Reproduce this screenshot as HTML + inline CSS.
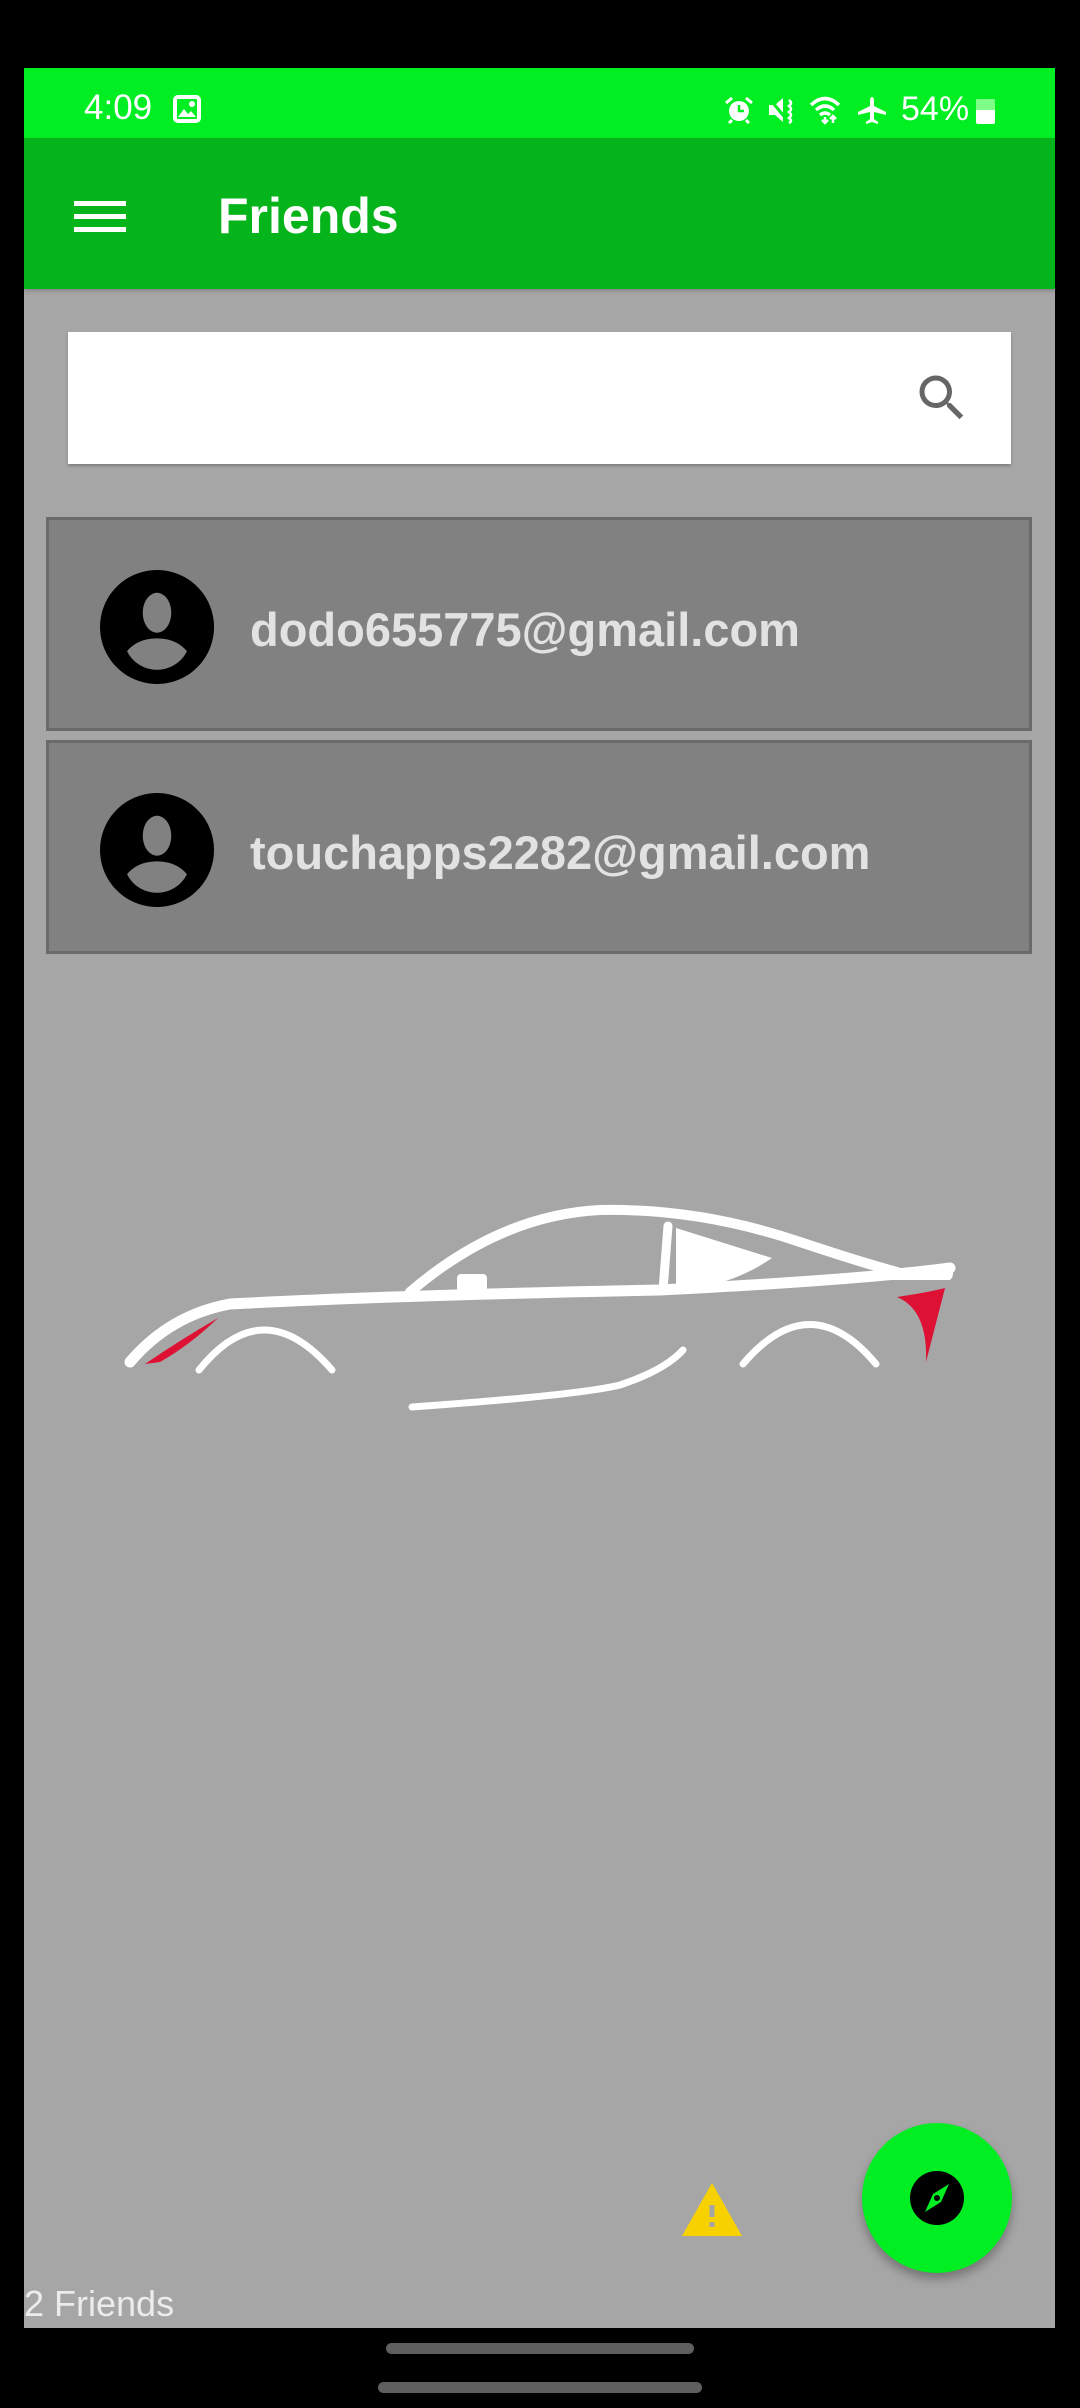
<!DOCTYPE html>
<html><head><meta charset="utf-8">
<style>
html,body{margin:0;padding:0;background:#000;}
body{width:1080px;height:2408px;position:relative;overflow:hidden;font-family:"Liberation Sans",sans-serif;}
.abs{position:absolute;}
#screen{left:24px;top:68px;width:1031px;height:2260px;background:#a6a6a6;}
#status{left:24px;top:68px;width:1031px;height:70px;background:#00ee22;}
#appbar{left:24px;top:138px;width:1031px;height:151px;background:#05b31a;box-shadow:0 2px 4px rgba(0,0,0,.2);}
.time{left:84px;top:88px;color:#fff;font-size:35px;}
.title{left:218px;top:187px;color:#fff;font-size:50px;font-weight:bold;}
.search{left:68px;top:332px;width:943px;height:132px;background:#fff;box-shadow:0 2px 3px rgba(0,0,0,.25);}
.item{left:46px;width:986px;height:214px;background:#818181;border:3px solid #6a6a6a;box-sizing:border-box;}
.item .txt{position:absolute;left:201px;top:82px;font-size:47px;font-weight:bold;color:#e2e2e2;}
.item svg{position:absolute;left:51px;top:50px;}
.count{left:24px;top:2283px;color:#ececec;font-size:36px;}
.fab{left:862px;top:2123px;width:150px;height:150px;border-radius:50%;background:#00ee22;box-shadow:0 6px 10px rgba(0,0,0,.3);}
.bar{background:#5f5f5f;border-radius:6px;height:11px;}
</style></head><body>
<div class="abs" id="screen"></div>
<div class="abs" id="status"></div>
<div class="abs" id="appbar"></div>
<div class="abs time">4:09</div>
<svg class="abs" style="left:173px;top:95px" width="28" height="28" viewBox="0 0 28 28"><rect x="2" y="2" width="24" height="24" rx="3" fill="none" stroke="#fff" stroke-width="4"/><path d="M5 22 L11 14 L15 19 L18 16 L23 22Z" fill="#fff"/><circle cx="19" cy="9" r="3" fill="#fff"/></svg>
<svg class="abs" style="left:724px;top:96px" width="30" height="28" viewBox="0 0 30 28"><circle cx="15" cy="15" r="10" fill="#fff"/><path d="M15 9 V15 H20" stroke="#00ee22" stroke-width="2.5" fill="none"/><path d="M2 7 L8 2 M28 7 L22 2 M8 24 L5 27 M22 24 L25 27" stroke="#fff" stroke-width="3"/></svg>
<svg class="abs" style="left:767px;top:96px" width="30" height="28" viewBox="0 0 30 28"><path d="M2 9 H8 L16 2 V26 L8 19 H2Z" fill="#fff"/><path d="M2 2 L20 24" stroke="#00ee22" stroke-width="3"/><path d="M22 4 Q26 7 22 10 Q26 13 22 16 Q26 19 22 22 Q26 25 22 27" stroke="#fff" stroke-width="2.5" fill="none"/></svg>
<svg class="abs" style="left:809px;top:95px" width="42" height="30" viewBox="0 0 42 30"><path d="M2 10 Q16 -3 30 10 M7 15 Q16 7 25 15 M11 20 Q16 16 21 20" stroke="#fff" stroke-width="3.5" fill="none"/><path d="M16 22 V28 M13 25 L16 28 L19 25 M24 28 V21 M21 24 L24 21 L27 24" stroke="#fff" stroke-width="2.5" fill="none"/></svg>
<svg class="abs" style="left:857px;top:96px" width="30" height="28" viewBox="0 0 30 28"><path d="M15 1 Q17 1 17 5 V10 L29 16 V19 L17 16 V23 L21 26 V28 L15 26 L9 28 V26 L13 23 V16 L1 19 V16 L13 10 V5 Q13 1 15 1Z" fill="#fff"/></svg>
<div class="abs" style="left:901px;top:90px;color:#fff;font-size:34px">54%</div>
<div class="abs" style="left:976px;top:99px;width:19px;height:25px;background:#fff;border-radius:2px"></div>
<div class="abs" style="left:976px;top:99px;width:19px;height:11px;background:#7fff88;border-radius:2px 2px 0 0"></div>
<div class="abs" style="left:74px;top:201px;width:52px;height:5px;background:#fff"></div>
<div class="abs" style="left:74px;top:214px;width:52px;height:5px;background:#fff"></div>
<div class="abs" style="left:74px;top:227px;width:52px;height:5px;background:#fff"></div>
<div class="abs title">Friends</div>
<div class="abs search"></div>
<svg class="abs" style="left:912px;top:368px" width="60" height="60" viewBox="0 0 24 24"><path fill="#666" d="M15.5 14h-.79l-.28-.27A6.47 6.47 0 0 0 16 9.5 6.5 6.5 0 1 0 9.5 16c1.61 0 3.09-.59 4.23-1.57l.27.28v.79l5 4.99L20.49 19l-4.99-5zm-6 0C7.01 14 5 11.99 5 9.5S7.01 5 9.5 5 14 7.01 14 9.5 11.99 14 9.5 14z"/></svg>
<div class="abs item" style="top:517px"><svg width="114" height="114" viewBox="0 0 40 40"><path fill="#000" fill-rule="evenodd" d="M20 0a20 20 0 1 0 0.01 0zM20 8a5 7 0 1 0 0.01 0zM20 24c-5 0-8.5 2-10.5 4.5 2 4 6 6.5 10.5 6.5s8.5-2.5 10.5-6.5C28.5 26 25 24 20 24z"/></svg><div class="txt">dodo655775@gmail.com</div></div>
<div class="abs item" style="top:740px"><svg width="114" height="114" viewBox="0 0 40 40"><path fill="#000" fill-rule="evenodd" d="M20 0a20 20 0 1 0 0.01 0zM20 8a5 7 0 1 0 0.01 0zM20 24c-5 0-8.5 2-10.5 4.5 2 4 6 6.5 10.5 6.5s8.5-2.5 10.5-6.5C28.5 26 25 24 20 24z"/></svg><div class="txt">touchapps2282@gmail.com</div></div>
<svg class="abs" style="left:100px;top:1180px" width="880" height="250" viewBox="0 0 880 250">
<g fill="none" stroke="#fff" stroke-linecap="round">
<path d="M310 112 Q400 35 500 30 Q600 28 700 62 Q760 82 797 92" stroke-width="10"/>
<path d="M30 182 Q70 135 130 124 Q300 115 560 110 Q760 100 850 88" stroke-width="11"/>
<path d="M99 190 Q163 110 232 190" stroke-width="7"/>
<path d="M643 184 Q710 105 776 184" stroke-width="7"/>
<path d="M312 227 Q480 215 520 205 Q565 190 583 170" stroke-width="7"/>
<path d="M563 110 L568 46" stroke-width="9"/>
</g>
<path d="M576 48 L672 78 Q640 100 602 107 L576 108Z" fill="#fff"/>
<path d="M760 95 L852 86 Q855 96 850 100 L770 100Z" fill="#fff"/>
<rect x="357" y="94" width="30" height="18" rx="4" fill="#fff"/>
<path d="M797 117 Q830 112 845 108 L826 182 Q828 130 797 117Z" fill="#dd1133"/>
<path d="M45 184 Q80 160 118 138 Q90 165 60 182Z" fill="#dd1133"/>
</svg>
<svg class="abs" style="left:682px;top:2183px" width="60" height="53" viewBox="0 0 60 53"><path d="M30 0 L60 53 L0 53Z" fill="#f7d200"/><rect x="27.5" y="22" width="5" height="12" fill="#a6a6a6"/><rect x="27.5" y="39" width="5" height="5" fill="#a6a6a6"/></svg>
<div class="abs fab"></div>
<svg class="abs" style="left:909px;top:2170px" width="56" height="56" viewBox="0 0 56 56"><circle cx="28" cy="28" r="27" fill="#000"/><path d="M40 14 L32 32 L16 42 L24 24Z" fill="#00ee22"/><circle cx="28" cy="28" r="3" fill="#000"/></svg>
<div class="abs count">2 Friends</div>
<div class="abs bar" style="left:386px;top:2343px;width:308px;"></div>
<div class="abs bar" style="left:378px;top:2382px;width:324px;"></div>
</body></html>
